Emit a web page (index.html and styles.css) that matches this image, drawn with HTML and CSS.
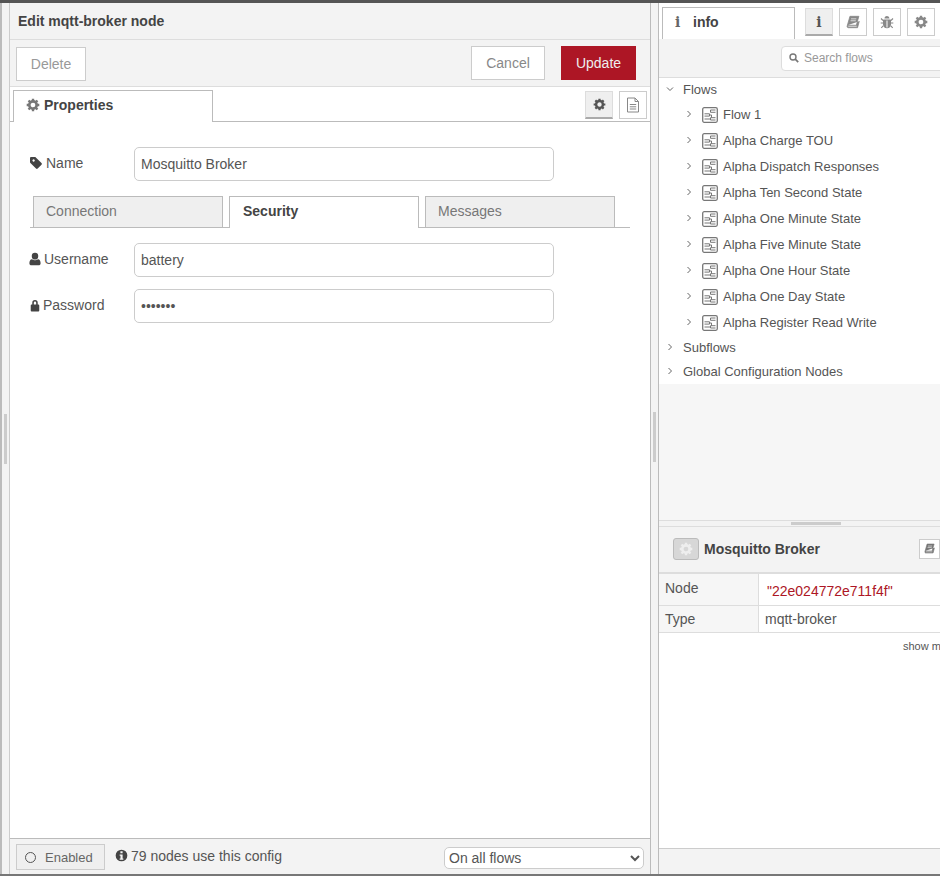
FILE: index.html
```html
<!DOCTYPE html>
<html lang="en">
<head>
<meta charset="utf-8">
<title>Edit mqtt-broker node</title>
<link rel="stylesheet" href="styles.css">
</head>
<body>
<svg class="defs" width="0" height="0" aria-hidden="true">
  <symbol id="i-gear" viewBox="0 0 16 16">
    <circle cx="8" cy="8" r="4.2" fill="none" stroke="currentColor" stroke-width="3"/>
    <path d="M8 .8v3M8 12.2v3M.8 8h3M12.2 8h3M2.9 2.9l2.1 2.1M11 11l2.1 2.1M2.9 13.1L5 11M11 5l2.1-2.1" fill="none" stroke="currentColor" stroke-width="2.7"/>
  </symbol>
  <symbol id="i-flow" viewBox="0 0 16 16">
    <rect x=".7" y=".7" width="14.6" height="14.6" rx="1.5" fill="none" stroke="currentColor" stroke-width="1.3"/>
    <path d="M8.500 3h5M8.500 5.300h5M8.500 3v2.300M2.500 6.800h5M2.500 9.100h5M7.500 6.800v2.300M8.500 10.700h5M8.500 13h5M8.500 10.700V13M7.500 8h2v2.700M2.500 12h6" fill="none" stroke="currentColor" stroke-width="1"/>
  </symbol>
  <symbol id="i-book" viewBox="0 0 16 16">
    <path d="M4.500 1.500h10.200l-2.900 10.200H1.600L4.500 1.500zM1.600 11.700c-.9 2.200.2 2.800 1 2.800h9.600l1 0 2-7.500" fill="currentColor" stroke="currentColor" stroke-width=".9" stroke-linejoin="round"/>
    <path d="M5.800 4.400h6M5.200 6.600h6M2.600 12.900h9.600" stroke="#fff" stroke-width=".8"/>
  </symbol>
</svg>
<div class="topbar"></div>
<div class="workspace">
  <div class="edge"><span class="grip"></span></div>

  <section class="tray">
    <header class="tray-title">Edit mqtt-broker node</header>
    <div class="tray-toolbar">
      <button class="btn btn-delete">Delete</button>
      <span class="spacer"></span>
      <button class="btn btn-cancel">Cancel</button>
      <button class="btn btn-primary">Update</button>
    </div>
    <div class="tray-tabs">
      <div class="tray-tab"><svg class="ico-14 ico-grey"><use href="#i-gear"/></svg>Properties</div>
      <span class="spacer"></span>
      <button class="mini active"><svg class="ico-13"><use href="#i-gear"/></svg></button>
      <button class="mini">
        <svg class="ico-16" viewBox="0 0 14 16"><path d="M1.500 1h7.500l3.500 3.500V15h-11zM9 1v3.500h3.500M3.800 7.500h6.400M3.800 9.800h6.400M3.800 12h6.400" fill="none" stroke="currentColor" stroke-width="1"/></svg>
      </button>
    </div>
    <div class="tray-body">
      <div class="form-row row-name">
        <label class="form-label">
          <svg class="ico-14 label-ico" viewBox="0 0 14 14"><path d="M1 2.200c0-.7.500-1.200 1.200-1.200h3.600c.4 0 .8.200 1 .4l5.700 5.700c.5.500.5 1.200 0 1.700l-3.800 3.800c-.5.500-1.200.5-1.700 0L1.400 6.900C1.100 6.600 1 6.300 1 5.900zM3.400 4.600a1.200 1.200 0 1 0 0-.1z" fill="currentColor" fill-rule="evenodd"/></svg>Name
        </label>
        <input class="field" value="Mosquitto Broker">
      </div>
      <div class="sub-tabs">
        <div class="sub-tab">Connection</div>
        <div class="sub-tab current">Security</div>
        <div class="sub-tab">Messages</div>
      </div>
      <div class="form-row row-user">
        <label class="form-label">
          <svg class="ico-12 label-ico" viewBox="0 0 12 14"><path d="M6 .8a3.200 3.200 0 0 1 3.200 3.400A3.200 3.200 0 0 1 6 7.500a3.200 3.200 0 0 1-3.200-3.300A3.200 3.200 0 0 1 6 .8zM3 7.200c.8.700 1.800 1 3 1s2.200-.3 3-1c1.800.2 2.600 1.600 2.600 4 0 1.400-.8 2-2 2H2.400c-1.200 0-2-.6-2-2 0-2.400.8-3.800 2.600-4z" fill="currentColor"/></svg>Username
        </label>
        <input class="field" value="battery">
      </div>
      <div class="form-row row-pass">
        <label class="form-label">
          <svg class="ico-11 label-ico" viewBox="0 0 11 14"><path d="M2.500 6V4a3 3 0 0 1 6 0v2h.7c.6 0 1 .4 1 1v5.500c0 .6-.4 1-1 1H1.800c-.6 0-1-.4-1-1V7c0-.6.4-1 1-1zm1.700 0h2.600V4a1.300 1.300 0 0 0-2.600 0z" fill="currentColor" fill-rule="evenodd"/></svg>Password
        </label>
        <input class="field" type="password" value="1234567">
      </div>
    </div>
    <footer class="tray-footer">
      <button class="enabled"><span class="ring"></span>Enabled</button>
      <span class="use-count">
        <svg class="ico-13 count-ico" viewBox="0 0 14 14"><path d="M7 .7a6.300 6.300 0 1 1 0 12.600A6.300 6.300 0 0 1 7 .7zM5.800 2.500v2h2.400v-2zM5 5.800v1.400h.9v3H5v1.300h4v-1.300h-.8V5.800z" fill="currentColor" fill-rule="evenodd"/></svg>79 nodes use this config
      </span>
      <span class="spacer"></span>
      <select class="scope"><option>On all flows</option></select>
    </footer>
  </section>

  <div class="separator"><span class="grip"></span></div>

  <aside class="sidebar">
    <div class="side-tabs">
      <div class="side-tab"><span class="info-i serif">i</span>info</div>
      <div class="side-buttons">
        <button class="mini active"><span class="serif info-b">i</span></button>
        <button class="mini"><svg class="ico-14"><use href="#i-book"/></svg></button>
        <button class="mini">
          <svg class="ico-14" viewBox="0 0 14 14"><path d="M4.500 3.500a2.500 2.500 0 0 1 5 0zM3.700 4.400h6.600c.4 0 .7.300.7.700v4.400A4 4 0 0 1 7 13.200a4 4 0 0 1-4-3.700V5.100c0-.4.300-.7.700-.7zM6.500 5.500v7h1v-7z" fill="currentColor" fill-rule="evenodd"/><path d="M3 5.500L1 3.500M11 5.500l2-2M3 8H.7M11 8h2.300M3.200 10.800L1.300 12.800M10.800 10.800l1.900 2" stroke="currentColor" stroke-width="1.100"/></svg>
        </button>
        <button class="mini"><svg class="ico-14"><use href="#i-gear"/></svg></button>
      </div>
    </div>
    <div class="search-row">
      <div class="search">
        <svg class="ico-10" viewBox="0 0 10 10"><circle cx="4" cy="4" r="3" fill="none" stroke="currentColor" stroke-width="1.400"/><path d="M6.200 6.200l3 3" stroke="currentColor" stroke-width="1.700"/></svg>
        <span>Search flows</span>
      </div>
    </div>
    <div class="tree-pane">
      <ul class="tree">
        <li class="tree-head"><svg class="chev" viewBox="0 0 8 8"><path d="M1 2.500l3 3 3-3" /></svg>Flows</li>
        <li class="tree-flow"><svg class="chev" viewBox="0 0 8 8"><path d="M2.500 1l3 3-3 3"/></svg><svg class="flow-ico"><use href="#i-flow"/></svg>Flow 1</li>
        <li class="tree-flow"><svg class="chev" viewBox="0 0 8 8"><path d="M2.500 1l3 3-3 3"/></svg><svg class="flow-ico"><use href="#i-flow"/></svg>Alpha Charge TOU</li>
        <li class="tree-flow"><svg class="chev" viewBox="0 0 8 8"><path d="M2.500 1l3 3-3 3"/></svg><svg class="flow-ico"><use href="#i-flow"/></svg>Alpha Dispatch Responses</li>
        <li class="tree-flow"><svg class="chev" viewBox="0 0 8 8"><path d="M2.500 1l3 3-3 3"/></svg><svg class="flow-ico"><use href="#i-flow"/></svg>Alpha Ten Second State</li>
        <li class="tree-flow"><svg class="chev" viewBox="0 0 8 8"><path d="M2.500 1l3 3-3 3"/></svg><svg class="flow-ico"><use href="#i-flow"/></svg>Alpha One Minute State</li>
        <li class="tree-flow"><svg class="chev" viewBox="0 0 8 8"><path d="M2.500 1l3 3-3 3"/></svg><svg class="flow-ico"><use href="#i-flow"/></svg>Alpha Five Minute State</li>
        <li class="tree-flow"><svg class="chev" viewBox="0 0 8 8"><path d="M2.500 1l3 3-3 3"/></svg><svg class="flow-ico"><use href="#i-flow"/></svg>Alpha One Hour State</li>
        <li class="tree-flow"><svg class="chev" viewBox="0 0 8 8"><path d="M2.500 1l3 3-3 3"/></svg><svg class="flow-ico"><use href="#i-flow"/></svg>Alpha One Day State</li>
        <li class="tree-flow"><svg class="chev" viewBox="0 0 8 8"><path d="M2.500 1l3 3-3 3"/></svg><svg class="flow-ico"><use href="#i-flow"/></svg>Alpha Register Read Write</li>
        <li class="tree-head tree-sub"><svg class="chev" viewBox="0 0 8 8"><path d="M2.500 1l3 3-3 3"/></svg>Subflows</li>
        <li class="tree-head tree-sub"><svg class="chev" viewBox="0 0 8 8"><path d="M2.500 1l3 3-3 3"/></svg>Global Configuration Nodes</li>
      </ul>
    </div>
    <div class="h-sep"><span class="h-grip"></span></div>
    <div class="info-head">
      <span class="node-chip"><svg class="ico-14"><use href="#i-gear"/></svg></span>
      <span class="node-name">Mosquitto Broker</span>
      <span class="spacer"></span>
      <button class="mini-small"><svg class="ico-10b"><use href="#i-book"/></svg></button>
    </div>
    <div class="info-table">
      <div class="cell-key key-node">Node</div><div class="cell-val val-id">"22e024772e711f4f"</div>
      <div class="cell-key key-type">Type</div><div class="cell-val val-type">mqtt-broker</div>
    </div>
    <div class="show-more">show more</div>
    <span class="spacer-v"></span>
    <div class="side-foot"></div>
  </aside>
</div>
<div class="bottombar"></div>
</body>
</html>
```
FILE: styles.css
```css
* { box-sizing: border-box; }
html, body { margin: 0; height: 100%; }
body {
  display: flex; flex-direction: column; height: 876px; width: 940px; overflow: hidden;
  font-family: "Liberation Sans", Arial, sans-serif; font-size: 14px; color: #555; background: #fff;
}
.defs { position: absolute; }
.topbar { height: 3px; background: #555; flex: none; }
.bottombar { height: 2px; background: #777; flex: none; }
.workspace { flex: 1; display: flex; min-height: 0; }
.spacer { flex: 1; }
.spacer-v { flex: 1; }
button { font-family: inherit; margin: 0; padding: 0; cursor: pointer; }

/* left edge + separator */
.edge {
  width: 10px; flex: none; background: #f3f3f3;
  border-left: 2px solid #bbb; border-right: 1px solid #ccc;
  display: flex; align-items: center; padding: 0 0 0 2px;
}
.grip { display: block; width: 3px; height: 50px; background: #ccc; }
.separator {
  width: 9px; flex: none; background: #f3f3f3;
  border-left: 1px solid #bbb; border-right: 1px solid #bbb;
  display: flex; align-items: center; justify-content: center; padding-bottom: 4px;
}

/* tray */
.tray { width: 640px; flex: none; display: flex; flex-direction: column; background: #fff; }
.tray-title {
  height: 37px; flex: none; background: #f3f3f3; border-bottom: 1px solid #ddd;
  padding: 0 8px; line-height: 36px; font-weight: bold; color: #444;
}
.tray-toolbar {
  height: 47px; flex: none; background: #f3f3f3; border-bottom: 1px solid #ddd;
  display: flex; align-items: flex-start; padding: 6px 14px 0 6px;
}
.btn { height: 34px; font-size: 14px; border: 1px solid #ccc; background: #fff; color: #999; }
.btn-delete { width: 70px; margin-top: 1px; }
.btn-cancel { width: 74px; margin-right: 16px; color: #888; }
.btn-primary { width: 75px; background: #ad1625; border-color: #ad1625; color: #eee; }

.tray-tabs {
  height: 35px; flex: none; display: flex; align-items: flex-start;
  border-bottom: 1px solid #bbb; padding: 3px 3px 0 3px;
}
.tray-tab {
  width: 200px; height: 32px; background: #fff;
  border: 1px solid #bbb; border-bottom: none;
  font-weight: bold; color: #444;
  display: flex; align-items: center; gap: 4px; padding: 0 0 3px 12px;
}
.mini {
  width: 28px; height: 28px; border: 1px solid #ccc; background: #fff; color: #888;
  display: flex; align-items: center; justify-content: center; margin-top: 1px;
}
.tray-tabs .mini + .mini { margin-left: 6px; }
.mini.active { background: #efefef; border-bottom: 2px solid #aaa; border-top-color: #ddd; border-left-color: #ddd; border-right-color: #ddd; color: #555; }
.ico-16 { width: 14px; height: 16px; flex: none; }
.ico-14 { width: 14px; height: 14px; flex: none; }
.ico-13 { width: 13px; height: 13px; flex: none; }
.ico-12 { width: 12px; height: 14px; flex: none; }
.ico-11 { width: 10px; height: 13px; flex: none; }
.ico-10 { width: 10px; height: 10px; flex: none; }
.ico-10b { width: 11px; height: 11px; flex: none; }
.ico-grey { color: #777; }

.tray-body { flex: 1; min-height: 0; padding: 25px 20px 0 20px; background: #fff; }
.form-row { display: flex; align-items: flex-start; }
.row-user { margin-top: 15px; }
.row-pass { margin-top: 12px; }
.form-label {
  width: 104px; flex: none; display: flex; align-items: center; gap: 3px;
  line-height: 20px; margin-top: 6px; color: #555;
}
.label-ico { color: #444; margin-left: -1px; }
.row-pass .label-ico { margin-left: 0; }
.field {
  width: 420px; height: 34px; border: 1px solid #ccc; border-radius: 5px; background: #fff;
  padding: 0 6px; font: 14px "Liberation Sans", Arial, sans-serif; color: #555; outline: none;
}
.sub-tabs {
  display: flex; gap: 6px; height: 32px; margin-top: 15px; padding-left: 3px;
  border-bottom: 1px solid #bbb;
}
.sub-tab {
  width: 190px; height: 31px; background: #efefef; border: 1px solid #bbb; border-bottom: none;
  padding-left: 12px; line-height: 29px; color: #777;
}
.sub-tab.current { height: 32px; background: #fff; font-weight: bold; color: #444; padding-left: 13px; }
.tray-footer {
  height: 36px; flex: none; background: #f3f3f3; border-top: 1px solid #bbb;
  display: flex; align-items: flex-start; padding: 5px 6px 0 6px;
}
.enabled {
  width: 89px; height: 26px; background: #efefef; border: 1px solid #ccc; font-size: 13px; color: #666;
  display: flex; align-items: center; padding-left: 8px; gap: 9px;
}
.ring { width: 11px; height: 11px; border: 1px solid #555; border-radius: 50%; flex: none; }
.use-count { margin-left: 10px; display: flex; align-items: center; gap: 3px; height: 23px; color: #555; }
.count-ico { color: #444; }
.scope {
  width: 200px; height: 22px; margin-top: 3px; border: 1px solid #ccc; border-radius: 5px; background: #fff;
  font: 14px "Liberation Sans", Arial, sans-serif; color: #555; padding: 0;
}

/* sidebar */
.sidebar { width: 281px; flex: none; display: flex; flex-direction: column; background: #fff; overflow: hidden; }
.side-tabs {
  height: 36px; flex: none; display: flex; align-items: flex-start; background: #fff;
  padding: 4px 0 0 3px;
}
.side-tab {
  width: 133px; height: 32px; border: 1px solid #bbb; border-bottom: none; background: #fff;
  display: flex; align-items: center; font-weight: bold; color: #444; padding: 0 0 3px 12px; gap: 10px;
}
.serif { font-family: "DejaVu Serif", "Liberation Serif", serif; font-weight: bold; }
.info-i { color: #666; width: 8px; }
.info-b { font-size: 14px; color: #555; }
.side-buttons { display: flex; gap: 6px; margin-left: 10px; }
.search-row {
  height: 39px; flex: none; background: #f3f3f3; border-bottom: 1px solid #ddd;
  padding: 7px 0 0 122px; overflow: hidden;
}
.search {
  width: 200px; height: 25px; border: 1px solid #ddd; border-radius: 4px; background: #fff;
  display: flex; align-items: center; gap: 5px; padding: 0 0 2px 7px; font-size: 12px; color: #999;
}
.search svg { color: #777; }
.tree-pane { height: 442px; flex: none; background: #f6f6f6; }
.tree { margin: 0; padding: 0; list-style: none; background: #fff; height: 306px; }
.tree li { display: flex; align-items: center; color: #555; white-space: nowrap; font-size: 13px; }
.tree-head { height: 22px; padding-left: 7px; }
.tree-head .chev { margin-right: 9px; }
.tree-head + .tree-flow { margin-top: 1px; }
.tree-flow { height: 26px; padding-left: 26px; }
.tree-sub { height: 24px; padding-left: 7px; }
.chev { width: 8px; height: 8px; flex: none; fill: none; stroke: #666; stroke-width: 1; }
.flow-ico { width: 16px; height: 16px; margin: 2px 5px 0 9px; color: #777; flex: none; }
.h-sep {
  height: 7px; flex: none; background: #f3f3f3; border-top: 1px solid #ddd; border-bottom: 1px solid #ddd;
  padding: 1px 0 0 132px;
}
.h-grip { display: block; width: 50px; height: 3px; background: #ccc; }
.info-head {
  height: 47px; flex: none; background: #f3f3f3; border-bottom: 2px solid #ddd;
  display: flex; align-items: center; padding: 0 0 2px 14px; overflow: hidden;
}
.node-chip {
  width: 26px; height: 22px; border: 1px solid #bbb; border-radius: 3px; background: #d7d7d7; color: #eee;
  display: flex; align-items: center; justify-content: center; flex: none;
}
.node-name { font-weight: bold; color: #444; margin-left: 5px; }
.mini-small {
  width: 21px; height: 20px; border: 1px solid #ccc; background: #fff; color: #777; flex: none;
  display: flex; align-items: center; justify-content: center;
}
.info-table { display: grid; grid-template-columns: 100px 181px; flex: none; }
.cell-key { background: #f6f6f6; border-right: 1px solid #ddd; border-bottom: 1px solid #ddd; padding: 0 6px; }
.cell-val { border-bottom: 1px solid #ddd; padding: 0 6px; white-space: nowrap; }
.key-node { height: 32px; line-height: 28px; }
.val-id { height: 32px; line-height: 34px; color: #ad1625; padding-left: 8px; }
.key-type, .val-type { height: 27px; line-height: 26px; }
.show-more { font-size: 11px; line-height: 14px; padding-left: 244px; margin-top: 6px; white-space: nowrap; color: #555; }
.side-foot { height: 26px; flex: none; background: #f3f3f3; border-top: 1px solid #ccc; }
```
